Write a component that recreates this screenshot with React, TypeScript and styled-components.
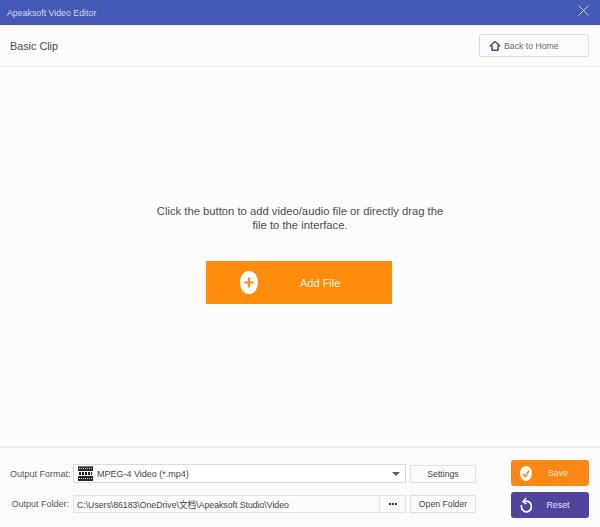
import React from 'react';
import styled, { createGlobalStyle } from 'styled-components';

const GlobalStyle = createGlobalStyle`
  html, body { margin: 0; padding: 0; background: #fcfcfc; }
  body { font-family: "Liberation Sans", "Noto Sans CJK SC", sans-serif; }
`;

const Window = styled.div`
  width: 600px;
  height: 527px;
  display: flex;
  flex-direction: column;
  overflow: hidden;
  background: #fcfcfc;
`;

const TitleBar = styled.div`
  height: 25px;
  flex: none;
  display: flex;
  align-items: center;
  justify-content: space-between;
  padding: 0 11px 0 7px;
  background: #4658b6;
  color: #d4d9f0;
  font-size: 8.8px;
`;

const CloseIcon = styled.svg`
  width: 11px;
  height: 11px;
  display: block;
  margin-top: -4px;
`;

const Header = styled.div`
  height: 41px;
  flex: none;
  display: flex;
  align-items: center;
  justify-content: space-between;
  padding: 0 11px 0 10px;
  border-bottom: 1px solid #e9e9e9;
`;

const PageTitle = styled.div`
  font-size: 10.8px;
  color: #4a4a4a;
`;

const HomeButton = styled.button`
  width: 110px;
  height: 23px;
  box-sizing: border-box;
  padding: 0 0 0 9px;
  display: flex;
  align-items: center;
  gap: 3px;
  background: #fcfcfc;
  border: 1px solid #dddbe6;
  border-radius: 2px;
  color: #6b6b78;
  font: inherit;
  font-size: 8.7px;
`;

const Main = styled.div`
  flex: 1;
  display: flex;
  flex-direction: column;
  align-items: center;
  padding-top: 137px;
`;

const Hint = styled.div`
  width: 300px;
  font-size: 11.25px;
  line-height: 14px;
  text-align: center;
  color: #4c4c4c;
`;

const AddButton = styled.button`
  margin: 29px 2px 0 0;
  width: 186px;
  height: 43px;
  display: flex;
  align-items: center;
  padding: 0 0 0 34px;
  border: 0;
  background: #ff8c0a;
  color: #fff2e0;
  font: inherit;
  font-size: 11px;
  span { margin-left: 42px; }
`;

const Footer = styled.div`
  height: 81px;
  flex: none;
  box-sizing: border-box;
  border-top: 2px solid #efefef;
  display: flex;
  justify-content: space-between;
  padding: 12px 11px 0 10px;
  background: #fbfbfb;
`;

const Fields = styled.div`
  display: flex;
  flex-direction: column;
  gap: 12px;
  padding-top: 4px;
`;

const FieldRow = styled.div`
  display: flex;
  align-items: center;
`;

const Label = styled.div`
  width: 59px;
  margin-right: 4px;
  text-align: right;
  font-size: 9px;
  white-space: nowrap;
  color: #555;
`;

const Select = styled.div`
  width: 333px;
  height: 19px;
  box-sizing: border-box;
  display: flex;
  align-items: center;
  padding: 0 5px 0 4px;
  background: #fff;
  border: 1px solid #d9d9e3;
  font-size: 9px;
  color: #444;
`;

const SelectText = styled.span`
  flex: 1;
  margin-left: 4px;
`;

const Caret = styled.div`
  width: 0;
  height: 0;
  border-left: 4px solid transparent;
  border-right: 4px solid transparent;
  border-top: 4px solid #555a6e;
`;

const PathBox = styled.div`
  width: 333px;
  height: 18px;
  box-sizing: border-box;
  display: flex;
  align-items: center;
  background: #fbfbfb;
  border: 1px solid #e4e4e4;
  font-size: 8.7px;
  color: #444;
`;

const PathText = styled.span`
  flex: 1;
  padding-left: 3px;
  white-space: nowrap;
`;

const DotsButton = styled.div`
  width: 25px;
  height: 100%;
  border-left: 1px solid #e4e4e4;
  display: flex;
  align-items: center;
  justify-content: center;
  gap: 1px;
`;

const Dot = styled.i`
  width: 2px;
  height: 2px;
  background: #333;
`;

const SideButton = styled.button`
  width: 66px;
  height: 18px;
  margin-left: 4px;
  padding: 0;
  background: #fbfbfb;
  border: 1px solid #dedede;
  border-radius: 1px;
  font: inherit;
  font-size: 8.7px;
  color: #444;
`;

const Actions = styled.div`
  display: flex;
  flex-direction: column;
  gap: 6px;
`;

const ActionButton = styled.button<{ $bg: string; $fg: string }>`
  width: 78px;
  height: 26px;
  display: flex;
  align-items: center;
  padding: 0 5px 0 9px;
  border: 0;
  border-radius: 3px;
  background: ${p => p.$bg};
  color: ${p => p.$fg};
  font: inherit;
  font-size: 8.8px;
  span { flex: 1; text-align: center; }
`;

const HomeIcon = () => (
  <svg width="12" height="12" viewBox="0 0 12 12" fill="none" stroke="#4d3f9c" strokeWidth="1.5">
    <path d="M6 1.5 L10.7 5.8 H9 V10.3 H3 V5.8 H1.3 Z" strokeLinejoin="round" />
  </svg>
);

const PlusIcon = () => (
  <svg width="18" height="23" viewBox="0 0 18 23">
    <ellipse cx="9" cy="11.5" rx="9" ry="11.5" fill="#fff" />
    <path d="M9 6.5 V16.5 M4.5 11.5 H13.5" stroke="#ff8c0a" strokeWidth="2.2" />
  </svg>
);

const CheckIcon = () => (
  <svg width="12" height="15" viewBox="0 0 12 15">
    <ellipse cx="6" cy="7.5" rx="6" ry="7.5" fill="#fff" />
    <path d="M3 7.8 L5.2 10.6 L9 4.6" stroke="#f7860f" strokeWidth="1.6" fill="none" />
  </svg>
);

const ResetIcon = () => (
  <svg width="12" height="16" viewBox="0 0 12 16" fill="none" stroke="#fff">
    <path d="M4.5 4.5 A5 5.4 0 1 1 1.6 8" strokeWidth="1.7" />
    <path d="M6 1 L3 4.5 L6.4 7" strokeWidth="1.5" />
  </svg>
);

const MpegIcon = () => (
  <svg width="15" height="15" viewBox="0 0 15 15">
    <rect width="15" height="15" fill="#2b2b2b" />
    <rect x="0" y="0" width="15" height="1" fill="#777" />
    <rect x="0" y="5" width="15" height="5" fill="#f2f2f2" />
    <path d="M1 2.5 H14 M1 12.5 H14" stroke="#ccc" strokeWidth="1" strokeDasharray="1 1" />
    <path d="M1 7.5 H14" stroke="#222" strokeWidth="3" strokeDasharray="2 1" />
  </svg>
);

const App = () => (
  <Window>
    <GlobalStyle />
    <TitleBar>
      Apeaksoft Video Editor
      <CloseIcon viewBox="0 0 11 11">
        <path d="M0.5 0.5 L10.5 10.5 M10.5 0.5 L0.5 10.5" stroke="#c9cfec" strokeWidth="1" />
      </CloseIcon>
    </TitleBar>
    <Header>
      <PageTitle>Basic Clip</PageTitle>
      <HomeButton>
        <HomeIcon />
        Back to Home
      </HomeButton>
    </Header>
    <Main>
      <Hint>Click the button to add video/audio file or directly drag the file to the interface.</Hint>
      <AddButton>
        <PlusIcon />
        <span>Add File</span>
      </AddButton>
    </Main>
    <Footer>
      <Fields>
        <FieldRow>
          <Label>Output Format:</Label>
          <Select>
            <MpegIcon />
            <SelectText>MPEG-4 Video (*.mp4)</SelectText>
            <Caret />
          </Select>
          <SideButton>Settings</SideButton>
        </FieldRow>
        <FieldRow>
          <Label>Output Folder:</Label>
          <PathBox>
            <PathText>C:\Users\86183\OneDrive\文档\Apeaksoft Studio\Video</PathText>
            <DotsButton>
              <Dot />
              <Dot />
              <Dot />
            </DotsButton>
          </PathBox>
          <SideButton>Open Folder</SideButton>
        </FieldRow>
      </Fields>
      <Actions>
        <ActionButton $bg="#fb8716" $fg="#ffe6c8">
          <CheckIcon />
          <span>Save</span>
        </ActionButton>
        <ActionButton $bg="#50459c" $fg="#e6e3f4">
          <ResetIcon />
          <span>Reset</span>
        </ActionButton>
      </Actions>
    </Footer>
  </Window>
);

export default App;
